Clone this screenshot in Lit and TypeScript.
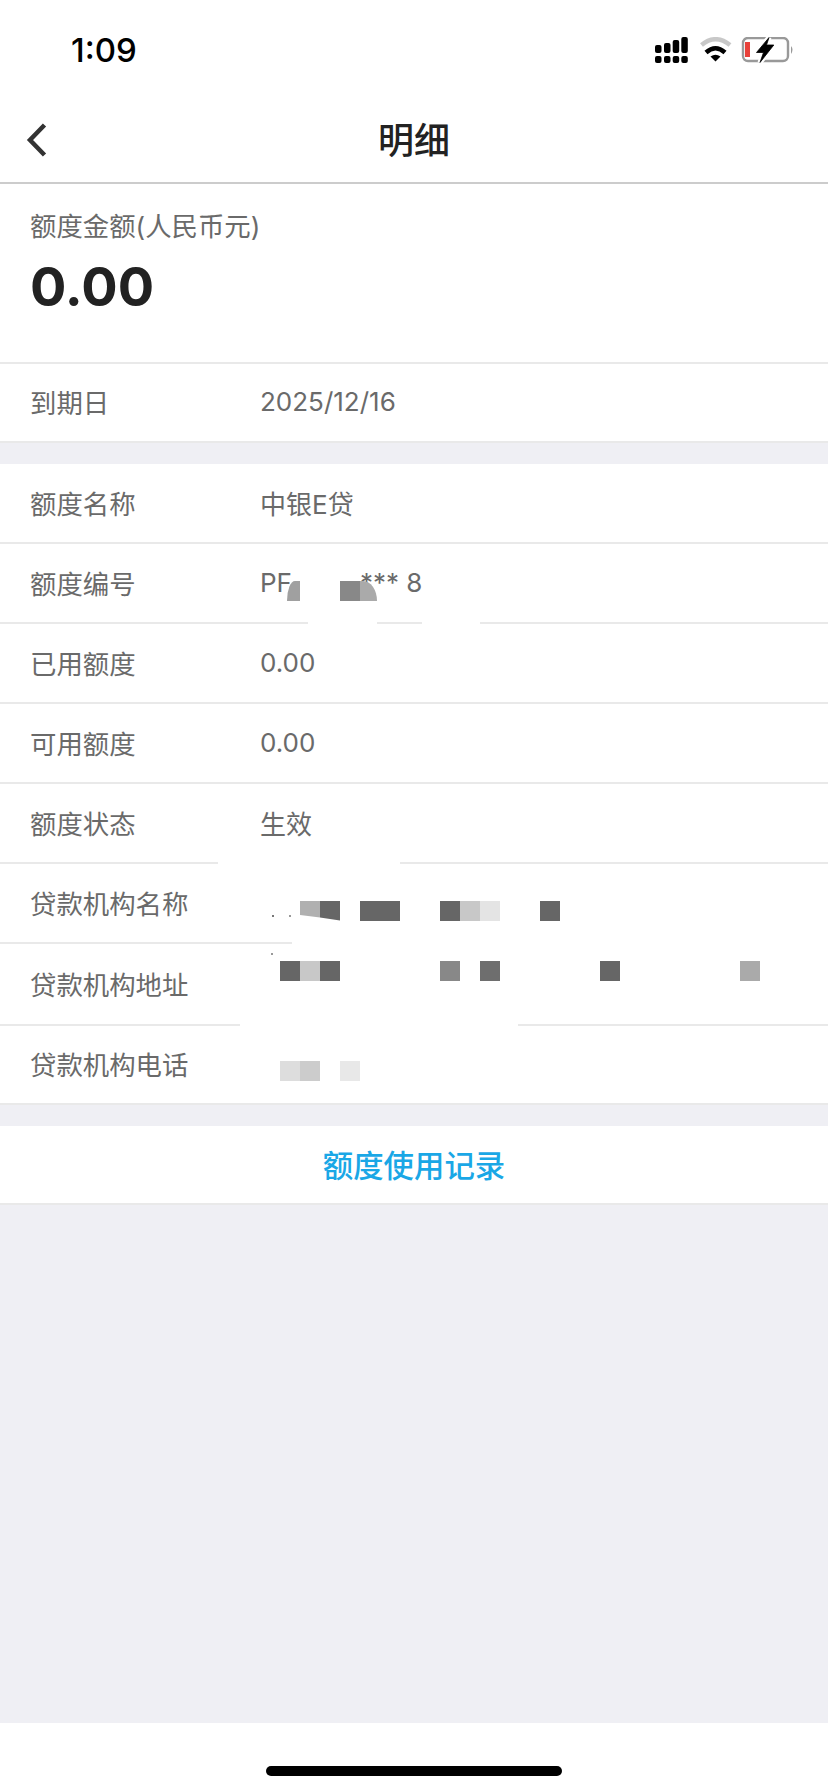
import { LitElement, css, html, svg } from "lit";
import { customElement } from "lit/decorators.js";

// x, width, colour, then any extra css for the odd clipped blocks
type Mark = [x: number, w: number, color: string, extra?: string];
type Gap = [x: number, w: number];

interface Row {
  label: string;
  value?: unknown;
  size?: string;
  markTop?: number;
  marks?: Mark[];
  gaps?: Gap[];
}

const statusIcons = svg`
  <g fill="#000">
    <rect x="0" y="8" width="6.5" height="8" rx="2" />
    <rect x="9" y="6" width="6.5" height="10" rx="2" />
    <rect x="17.7" y="3" width="6.5" height="13" rx="2" />
    <rect x="26.3" y="0" width="6.5" height="16" rx="2" />
    <rect x="0" y="19" width="6.5" height="7" rx="2" />
    <rect x="9" y="19" width="6.5" height="7" rx="2" />
    <rect x="17.7" y="19" width="6.5" height="7" rx="2" />
    <rect x="26.3" y="19" width="6.5" height="7" rx="2" />
  </g>
  <path d="M46.5 8 Q60.5 -3.5 75 8" fill="none" stroke="#c8c8c8" stroke-width="4.5" />
  <path d="M51 15.5 Q60.5 7 70 15.5" fill="none" stroke="#000" stroke-width="4.5" />
  <path d="M55.5 19.5 Q60.5 16 65.5 19.5 L60.5 24.5 Z" fill="#000" />
  <rect x="88" y="1" width="45" height="23" rx="5" fill="none" stroke="#999" stroke-width="2.4" />
  <rect x="90" y="5" width="5" height="15" fill="#e8413a" />
  <path d="M136 9 Q139 12.5 136 17 Z" fill="#999" />
  <path d="M114 0.5 L101.5 15.5 L108.5 15.5 L105 25.5 L118.8 8 L111.5 8 Z" fill="none" stroke="#fff" stroke-width="5" />
  <path d="M114 0.5 L101.5 15.5 L108.5 15.5 L105 25.5 L118.8 8 L111.5 8 Z" fill="#000" stroke="#000" stroke-width="0.8" />
`;

const limitRows: Row[] = [
  { label: "额度名称", value: "中银E贷" },
  {
    label: "额度编号",
    value: html`PF<span class="tail">*** 8</span>`,
    markTop: 37,
    marks: [
      [287, 13, "#a0a0a0", "border-top-left-radius:8px 20px"],
      [340, 20, "#888888"],
      [360, 17, "#aaaaaa", "border-top-right-radius:14px 20px"],
    ],
    gaps: [
      [308, 69],
      [422, 58],
    ],
  },
  { label: "已用额度", value: "0.00" },
  { label: "可用额度", value: "0.00" },
  { label: "额度状态", value: "生效", gaps: [[218, 182]] },
  {
    label: "贷款机构名称",
    markTop: 37,
    marks: [
      [272, 2, "#777777", "height:2px;margin-top:14px"],
      [289, 2, "#999999", "height:2px;margin-top:14px"],
      [300, 20, "#b0b0b0", "clip-path:polygon(0 0,100% 0,100% 82%,0 70%)"],
      [320, 20, "#666666", "clip-path:polygon(0 0,100% 0,100% 97%,0 82%)"],
      [360, 40, "#666666"],
      [440, 20, "#666666"],
      [460, 20, "#c8c8c8"],
      [480, 20, "#e4e4e4"],
      [540, 20, "#666666"],
    ],
    gaps: [[292, 536]],
  },
  {
    label: "贷款机构地址",
    size: "tall",
    markTop: 17,
    marks: [
      [271, 2, "#999999", "height:2px;margin-top:-8px"],
      [280, 20, "#666666"],
      [300, 20, "#c8c8c8"],
      [320, 20, "#666666"],
      [440, 20, "#888888"],
      [480, 20, "#6e6e6e"],
      [600, 20, "#666666"],
      [740, 20, "#aaaaaa"],
    ],
    gaps: [[240, 278]],
  },
  {
    label: "贷款机构电话",
    size: "short",
    markTop: 35,
    marks: [
      [280, 20, "#dddddd"],
      [300, 20, "#cccccc"],
      [340, 20, "#e8e8e8"],
    ],
  },
];

@customElement("app-root")
class AppRoot extends LitElement {
  static styles = css`
    :host {
      display: flex;
      flex-direction: column;
      height: 1792px;
      background: #efeff4;
      font-family: Inter, "Noto Sans CJK SC", sans-serif;
      color: #6a6a6a;
    }

    .status {
      display: flex;
      justify-content: space-between;
      align-items: center;
      height: 92px;
      padding: 4px 34px 0 71px;
      background: #fff;
    }

    .time {
      font-size: 33px;
      font-weight: 500;
      color: #000;
    }

    .nav {
      position: relative;
      display: flex;
      justify-content: center;
      align-items: center;
      height: 86px;
      background: #fff;
      border-bottom: 2px solid #cccccc;
    }

    .nav svg {
      position: absolute;
      left: 26px;
      top: 27px;
    }

    .nav h1 {
      margin: 0 0 2px;
      font-size: 36px;
      font-weight: 500;
      color: #222;
    }

    .amount {
      display: flex;
      flex-direction: column;
      height: 180px;
      padding: 23px 30px 0;
      box-sizing: border-box;
      background: #fff;
      border-bottom: 2px solid #e9e9e9;
    }

    .amount span {
      font-size: 26.4px;
      line-height: 38px;
    }

    .amount strong {
      margin-top: 8px;
      font-size: 54px;
      line-height: 68px;
      font-weight: 700;
      color: #222;
    }

    .group {
      background: #fff;
      margin-bottom: 21px;
    }

    .row {
      position: relative;
      display: flex;
      align-items: center;
      box-sizing: border-box;
      height: 80px;
      padding: 0 0 2px 30px;
      font-size: 26.4px;
      background: #fff;
      border-bottom: 2px solid #e9e9e9;
    }

    .row.short {
      height: 79px;
    }

    .row.tall {
      height: 82px;
    }

    .label {
      width: 230px;
      flex: none;
    }

    .value {
      font-size: 26px;
    }

    .tail {
      margin-left: 68px;
      white-space: pre;
    }

    .mark {
      position: absolute;
      height: 20px;
    }

    .gap {
      position: absolute;
      bottom: -2px;
      height: 2px;
      background: #fff;
    }

    .link {
      display: flex;
      justify-content: center;
      align-items: center;
      box-sizing: border-box;
      height: 79px;
      padding-bottom: 2px;
      font-size: 30.4px;
      font-weight: 500;
      color: #1aa7e6;
      background: #fff;
      border-bottom: 2px solid #e9e9e9;
    }

    .fill {
      flex: 1;
    }

    .home {
      display: flex;
      justify-content: center;
      height: 69px;
      padding-top: 43px;
      box-sizing: border-box;
      background: #fff;
    }

    .home div {
      width: 296px;
      height: 10px;
      border-radius: 5px;
      background: #000;
    }
  `;

  renderRow(row: Row) {
    return html`
      <div class="row ${row.size ?? ""}">
        <span class="label">${row.label}</span>
        <span class="value">${row.value}</span>
        ${(row.marks ?? []).map(
          ([x, w, color, extra]) =>
            html`<i class="mark" style="left:${x}px;width:${w}px;top:${row.markTop}px;background:${color};${extra ?? ""}"></i>`,
        )}
        ${(row.gaps ?? []).map(
          ([x, w]) => html`<i class="gap" style="left:${x}px;width:${w}px"></i>`,
        )}
      </div>
    `;
  }

  render() {
    return html`
      <div class="status">
        <span class="time">1:09</span>
        <svg width="139" height="26" viewBox="0 0 139 26">${statusIcons}</svg>
      </div>
      <div class="nav">
        <svg width="22" height="34" viewBox="0 0 22 34">
          <path d="M18.5 2 L4 17 L18.5 32" fill="none" stroke="#333" stroke-width="4.5" />
        </svg>
        <h1>明细</h1>
      </div>

      <div class="amount">
        <span>额度金额(人民币元)</span>
        <strong>0.00</strong>
      </div>
      <div class="group">
        ${this.renderRow({ label: "到期日", value: "2025/12/16", size: "short" })}
      </div>

      <div class="group">${limitRows.map((row) => this.renderRow(row))}</div>

      <div class="link">额度使用记录</div>
      <div class="fill"></div>
      <div class="home"><div></div></div>
    `;
  }
}

export default AppRoot;
